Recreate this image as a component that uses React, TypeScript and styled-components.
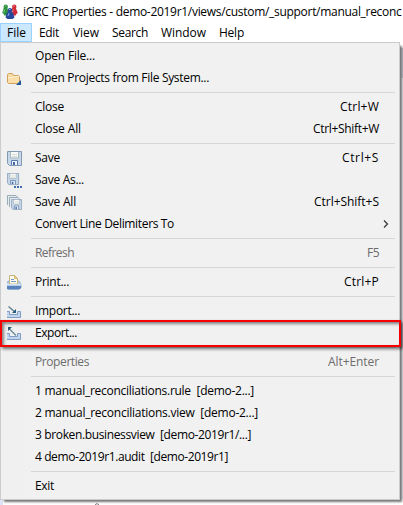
import React, { useLayoutEffect, useRef, useState } from 'react';
import styled, { createGlobalStyle } from 'styled-components';

const GlobalStyle = createGlobalStyle`
  html, body { margin: 0; padding: 0; overflow: hidden; background: #fff; }
  * { box-sizing: border-box; }
`;

const Window = styled.div`
  position: relative;
  width: 403px;
  height: 505px;
  overflow: hidden;
  display: flex;
  flex-direction: column;
  background: linear-gradient(#fff, #fff) 3px 0 / 400px 505px no-repeat, #dfe3f8;
  font: 12px/22px 'Open Sans', 'Noto Sans', sans-serif;
  color: #000;
`;

const TitleBar = styled.header`
  display: flex;
  align-items: center;
  height: 23px;
  flex: none;
  padding-left: 2px;
  background: #fff;
  gap: 5px;
`;

const MenuBar = styled.nav`
  display: grid;
  grid-template-columns: 32px 34px 39px 49px 58px 40px;
  height: 19px;
  flex: none;
  background: #fff;
`;

const MenuTitle = styled.div<{ $open?: boolean }>`
  height: 19px;
  padding-left: 7px;
  line-height: 18px;
  border: 1px solid ${p => (p.$open ? '#99d1ff' : 'transparent')};
  border-left-width: ${p => (p.$open ? '1px' : '0')};
  padding-left: ${p => (p.$open ? '6px' : '7px')};
  background: ${p => (p.$open ? '#cce8ff' : 'transparent')};
`;

const Workspace = styled.main`
  position: relative;
  flex: 1;
  background: linear-gradient(#b6bccd, #b6bccd) 395px 6px / 8px 30px no-repeat,
    linear-gradient(#dfe3ee, #dfe3ee) 395px 36px / 8px 421px no-repeat;
`;

const Menu = styled.div`
  width: 400px;
  height: 458px;
  display: flex;
  flex-direction: column;
  padding: 2px 2px 2px 1px;
  border: 1px solid #ccc;
  background: linear-gradient(#f1f1f1, #f1f1f1) 30px 0 / 370px 458px no-repeat, #f0f0f0;
  box-shadow: 3px 3px 2px -1px #777;
`;

const Row = styled.div<{ $muted?: boolean }>`
  display: grid;
  grid-template-columns: 33px 1fr auto;
  height: 22px;
  padding-right: 18px;
  color: ${p => (p.$muted ? '#6d6d6d' : '#000')};
`;

const IconCell = styled.span`
  display: flex;
  padding: 4px 0 0 5px;
`;

const Separator = styled.div`
  height: 1px;
  margin: 3px 2px 3px 29px;
  background: #d7d7d7;
`;

const Chevron = styled.svg`
  justify-self: end;
  margin: 7px -10px 0 0;
`;

const Highlight = styled.div`
  position: absolute;
  left: 0;
  top: 278px;
  width: 401px;
  height: 27px;
  border: 2px solid #f80000;
  box-shadow: 2px 2px 3px rgba(0, 0, 0, 0.55), inset 2px 2px 3px rgba(0, 0, 0, 0.45);
`;

const Residue = styled.svg`
  position: absolute;
  left: 94px;
  bottom: 0;
`;

const TextSpan = styled.span`
  display: inline-block;
  white-space: pre;
`;

/** Text tracked so that its advance equals the given width. */
function Label({ text, width }: { text: string; width: number }) {
  const ref = useRef<HTMLSpanElement>(null);
  const [spacing, setSpacing] = useState(0);
  useLayoutEffect(() => {
    if (ref.current) setSpacing((width - ref.current.getBoundingClientRect().width) / text.length);
  }, [text, width]);
  return (
    <span>
      <TextSpan ref={ref} style={{ letterSpacing: spacing }}>{text}</TextSpan>
    </span>
  );
}

type IconName = 'folder' | 'save' | 'saveAs' | 'saveAll' | 'print' | 'import' | 'export';

const Disk = () => (
  <>
    <path d="M.5 .5h14v14h-12l-2-2z" fill="#c6d7ea" stroke="#8499b4" />
    <path d="M3.500 1v6h8V1" fill="#f7faf8" stroke="#a5b6b8" />
    <path d="M5 3.500h5M5 5.500h5" stroke="#d5dcd7" />
    <path d="M4.500 14V9.500h6V14" fill="#f1f6fb" stroke="#5879ad" />
    <path d="M6 11h2v3H6z" fill="#4468a5" />
  </>
);

const Tray = () => (
  <path d="M.5 7.500h3v3h8v-3h3v6H.5z" fill="#c0d5eb" stroke="#7f9dc5" />
);

function Icon({ name }: { name: IconName }) {
  return (
    <svg width="17" height="17" viewBox="0 0 17 17">
      {name === 'folder' && (
        <>
          <path d="M.5 11.500v-8l1-1h4l1 2h5l1 1v6l-1 1h-10z" fill="#f8dba4" stroke="#cfa35c" />
          <path d="M1 6.500h5l1-1h5v6H1z" fill="#fbdfaa" />
          <path d="M1 6.500h4.500l1-1H12" fill="none" stroke="#fff0cd" />
          <path d="M14 9v5H9z" fill="#1d5b9d" />
        </>
      )}
      {name === 'save' && <Disk />}
      {name === 'saveAs' && (
        <>
          <g transform="scale(.8)"><Disk /></g>
          <path d="M7 13h2v2H7zM10 13h2v2h-2zM13 13h2v2h-2z" fill="#416cae" />
        </>
      )}
      {name === 'saveAll' && (
        <>
          <path d="M.5 10V.5H9l1.500 1.500" fill="#e2ebee" stroke="#9aabb6" />
          <path d="M2.500 12V2.500H11l1.500 1.500" fill="#e2ebee" stroke="#9aabb6" />
          <g transform="translate(4.200 4.200) scale(.71)"><Disk /></g>
        </>
      )}
      {name === 'print' && (
        <g transform="translate(-1 0)">
          <path d="M2 6h11l2 3v4l-2 1H2l-2-1V9z" fill="#b5cbe6" stroke="#91abd0" strokeWidth=".8" />
          <path d="M3.500 9V.5h5l3 3V9z" fill="#fffdf0" stroke="#c9b27a" />
          <path d="M8.500.5v3h3z" fill="#efce79" stroke="#c9aa5e" strokeWidth=".7" />
          <path d="M5 4.500h3M5 6.500h5" stroke="#7795bd" />
          <path d="M0 9.500h15" stroke="#d5e5f5" />
          <path d="M0 11h15v2l-2 1.500H2L0 13z" fill="#5a83bd" />
        </g>
      )}
      {name === 'import' && (
        <g transform="translate(-1 0)">
          <Tray />
          <path d="M2.500 2.500l7 6" stroke="#567c8f" strokeWidth="1.200" />
          <path d="M10 5v4H6z" fill="#245d7b" />
        </g>
      )}
      {name === 'export' && (
        <g transform="translate(-1 0)">
          <Tray />
          <path d="M3 2.500l7 7" stroke="#64899b" strokeWidth="1.200" />
          <path d="M2 1h4L2 5z" fill="#285b70" />
        </g>
      )}
    </svg>
  );
}

const Person = ({ x, y, color, light }: { x: number; y: number; color: string; light: string }) => (
  <g transform={`translate(${x} ${y})`}>
    <path d="M1.500 3.500h3.500L7 8.500l-1.500 1L5 11H2l-.5-1.500L0 8.500z" fill={color} />
    <circle cx="3.500" cy="2.200" r="2.200" fill={color} />
    <path d="M2.500 1.500h1.500M2.500 5l-1 3" stroke={light} />
  </g>
);

const AppIcon = () => (
  <svg width="16" height="16" viewBox="0 0 16 16">
    <Person x={0.2} y={0.5} color="#2f9142" light="#87ce79" />
    <Person x={8.8} y={0.5} color="#cf2b38" light="#f68a84" />
    <path d="M5 8.500h6l1.500 5-2 1.500H5.500l-2-1.500z" fill="#2a489b" />
    <Person x={4.500} y={4} color="#2a489b" light="#84a6ed" />
  </svg>
);

type Item = {
  text: string;
  width: number;
  icon?: IconName;
  keys?: [string, number];
  muted?: boolean;
  submenu?: boolean;
};

const groups: Item[][] = [
  [
    { text: 'Open File...', width: 60 },
    { text: 'Open Projects from File System...', width: 174, icon: 'folder' },
  ],
  [
    { text: 'Close', width: 29, keys: ['Ctrl+W', 39] },
    { text: 'Close All', width: 46, keys: ['Ctrl+Shift+W', 66] },
  ],
  [
    { text: 'Save', width: 25, icon: 'save', keys: ['Ctrl+S', 37] },
    { text: 'Save As...', width: 49, icon: 'saveAs' },
    { text: 'Save All', width: 41, icon: 'saveAll', keys: ['Ctrl+Shift+S', 65] },
    { text: 'Convert Line Delimiters To', width: 139, submenu: true },
  ],
  [{ text: 'Refresh', width: 39, keys: ['F5', 12], muted: true }],
  [{ text: 'Print...', width: 34, icon: 'print', keys: ['Ctrl+P', 35] }],
  [
    { text: 'Import...', width: 45, icon: 'import' },
    { text: 'Export...', width: 42, icon: 'export' },
  ],
  [{ text: 'Properties', width: 54, keys: ['Alt+Enter', 51], muted: true }],
  [
    { text: '1 manual_reconciliations.rule  [demo-2...]', width: 219 },
    { text: '2 manual_reconciliations.view  [demo-2...]', width: 223 },
    { text: '3 broken.businessview  [demo-2019r1/...]', width: 216 },
    { text: '4 demo-2019r1.audit  [demo-2019r1]', width: 193 },
  ],
  [{ text: 'Exit', width: 19 }],
];

const titles: [string, number][] = [
  ['File', 19], ['Edit', 20], ['View', 26], ['Search', 36], ['Window', 45], ['Help', 25],
];

export default function App() {
  return (
    <Window>
      <GlobalStyle />
      <TitleBar>
        <AppIcon />
        <Label text="iGRC Properties - demo-2019r1/views/custom/_support/manual_reconc" width={378.5} />
      </TitleBar>
      <MenuBar>
        {titles.map(([text, width], i) => (
          <MenuTitle key={text} $open={i === 0}><Label text={text} width={width} /></MenuTitle>
        ))}
      </MenuBar>
      <Workspace>
        <Menu>
          {groups.map((group, i) => (
            <React.Fragment key={i}>
              {i > 0 && <Separator />}
              {group.map(item => (
                <Row key={item.text} $muted={item.muted}>
                  <IconCell>{item.icon && <Icon name={item.icon} />}</IconCell>
                  <Label text={item.text} width={item.width} />
                  {item.keys && <Label text={item.keys[0]} width={item.keys[1]} />}
                  {item.submenu && (
                    <Chevron width="6" height="8" viewBox="0 0 6 8">
                      <path d="M1 .5L4.500 4L1 7.500" fill="none" stroke="#333" strokeWidth="1.200" />
                    </Chevron>
                  )}
                </Row>
              ))}
            </React.Fragment>
          ))}
        </Menu>
        <Highlight />
        <Residue width="6" height="2" viewBox="0 0 6 2">
          <path d="M1 2Q3-1 5 2" fill="none" stroke="#777" />
        </Residue>
      </Workspace>
    </Window>
  );
}
